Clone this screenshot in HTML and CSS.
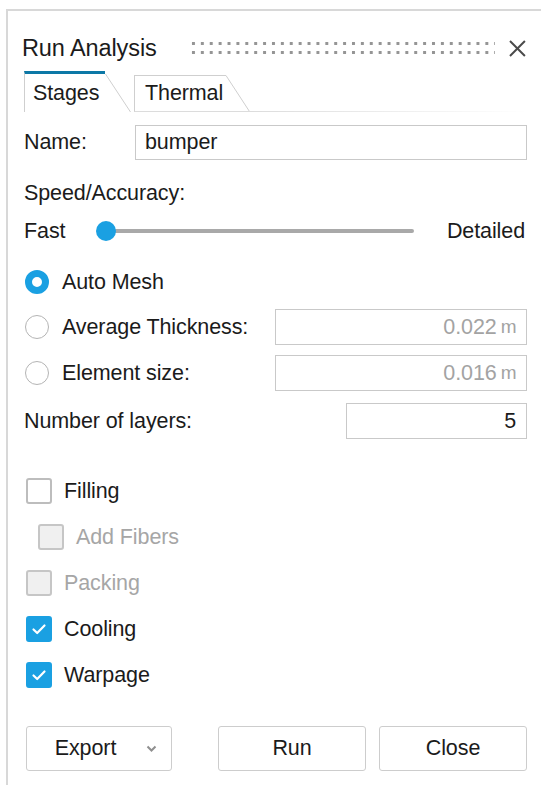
FILE: index.html
```html
<!DOCTYPE html>
<html lang="en">
<head>
<meta charset="utf-8">
<title>Run Analysis</title>
<link rel="stylesheet" href="styles.css">
</head>
<body>
<div class="panel">
  <div class="header">
    <span class="title">Run Analysis</span>
    <div class="grip"></div>
    <svg class="close" width="19" height="19" viewBox="0 0 19 19" aria-label="Close">
      <path d="M2 2 L17 17 M17 2 L2 17" stroke="#4a4a4a" stroke-width="2" fill="none"/>
    </svg>
  </div>

  <div class="tabs">
    <div class="tab tab-active">Stages</div>
    <svg class="slant" width="26" height="41" viewBox="0 0 26 41">
      <path d="M0.5 3 L25.5 41" stroke="#cfcfcf" stroke-width="1" fill="none"/>
    </svg>
    <div class="tab tab-idle">Thermal</div>
    <svg class="slant" width="24" height="37" viewBox="0 0 24 37">
      <path d="M0 0.5 L23.5 36.5" stroke="#cfcfcf" stroke-width="1" fill="none"/>
      <path d="M0 36.5 L24 36.5" stroke="#dcdcdc" stroke-width="1" fill="none"/>
    </svg>
    <div class="tab-rest"></div>
  </div>

  <div class="row row-name">
    <label class="lbl lbl-name">Name:</label>
    <div class="field field-name">bumper</div>
  </div>

  <div class="row row-text">Speed/Accuracy:</div>

  <div class="row row-slider">
    <span class="fast">Fast</span>
    <div class="slider">
      <div class="track"></div>
      <div class="thumb"></div>
    </div>
    <span class="detailed">Detailed</span>
  </div>

  <div class="row row-radio first">
    <span class="radio on"></span>
    <span>Auto Mesh</span>
  </div>
  <div class="row row-radio">
    <span class="radio"></span>
    <span class="grow">Average Thickness:</span>
    <div class="field field-unit disabled">0.022<span class="unit">m</span></div>
  </div>
  <div class="row row-radio">
    <span class="radio"></span>
    <span class="grow">Element size:</span>
    <div class="field field-unit disabled">0.016<span class="unit">m</span></div>
  </div>
  <div class="row row-layers">
    <span class="grow">Number of layers:</span>
    <div class="field field-num">5</div>
  </div>

  <div class="checks">
    <div class="check-row">
      <span class="box"></span>
      <span>Filling</span>
    </div>
    <div class="check-row sub muted">
      <span class="box off"></span>
      <span>Add Fibers</span>
    </div>
    <div class="check-row muted">
      <span class="box off"></span>
      <span>Packing</span>
    </div>
    <div class="check-row">
      <span class="box checked"><svg width="16" height="16" viewBox="0 0 16 16"><path d="M2.5 8.5 L6.2 12 L13.5 4.5" stroke="#fff" stroke-width="2.2" fill="none" stroke-linecap="round" stroke-linejoin="round"/></svg></span>
      <span>Cooling</span>
    </div>
    <div class="check-row">
      <span class="box checked"><svg width="16" height="16" viewBox="0 0 16 16"><path d="M2.5 8.5 L6.2 12 L13.5 4.5" stroke="#fff" stroke-width="2.2" fill="none" stroke-linecap="round" stroke-linejoin="round"/></svg></span>
      <span>Warpage</span>
    </div>
  </div>

  <div class="buttons">
    <button class="btn btn-export"><span>Export</span>
      <svg width="11" height="7" viewBox="0 0 11 7"><path d="M1.5 1.5 L5.5 5.5 L9.5 1.5" stroke="#8f8f8f" stroke-width="2" fill="none"/></svg>
    </button>
    <button class="btn btn-run">Run</button>
    <button class="btn btn-close">Close</button>
  </div>
</div>
</body>
</html>
```

FILE: styles.css
```css
* {
  box-sizing: border-box;
}

html, body {
  margin: 0;
  padding: 0;
  background: #ffffff;
}

body {
  font-family: "Liberation Sans", Arial, sans-serif;
  font-size: 21.5px;
  letter-spacing: -0.1px;
  color: #1b1b1b;
  overflow: hidden;
}

.panel {
  margin: 9px 0 0 6px;
  height: 776px;
  border-top: 2px solid #d8d8d8;
  border-left: 2px solid #d8d8d8;
  padding: 0 14px 0 15px;
}

/* title bar */
.header {
  display: flex;
  align-items: center;
  height: 26px;
  margin-top: 24px;
}

.title {
  width: 168px;
  margin-left: -1px;
  font-size: 23.5px;
}

.grip {
  flex: 0 0 306px;
  height: 18px;
  background-image: radial-gradient(circle, #959595 1.4px, transparent 2px);
  background-size: 8.9px 9px;
  background-position: 0 0;
}

.close {
  margin-left: 13px;
}

/* tab strip */
.tabs {
  display: flex;
  align-items: flex-end;
  height: 41px;
  margin-top: 10px;
}

.tab {
  display: flex;
  align-items: center;
}

.tab-active {
  margin-left: 1px;
  width: 81px;
  height: 41px;
  padding-left: 8px;
  padding-top: 1px;
  border-left: 1px solid #cfcfcf;
  border-top: 3px solid #0c78a6;
}

.tab-idle {
  margin-left: 3px;
  width: 92px;
  height: 37px;
  padding-left: 10px;
  border-left: 1px solid #cfcfcf;
  border-top: 1px solid #cfcfcf;
  border-bottom: 1px solid #dcdcdc;
}

.slant {
  display: block;
  flex: none;
}

.tab-rest {
  flex: 1;
  height: 1px;
  background: linear-gradient(to right, #dcdcdc, #f4f4f4 70%, #ffffff);
}

/* form rows */
.row {
  display: flex;
  align-items: center;
  padding-left: 1px;
}

.row-name {
  height: 35px;
  margin-top: 13px;
}

.lbl-name {
  width: 111px;
}

.field {
  height: 100%;
  border: 1px solid #c9c9c9;
  display: flex;
  align-items: center;
  background: #ffffff;
}

.field-name {
  flex: 1;
  padding-left: 9px;
}

.row-text {
  height: 34px;
  margin-top: 16px;
}

.row-slider {
  height: 34px;
  margin-top: 4px;
}

.fast {
  width: 72px;
}

.slider {
  position: relative;
  width: 318px;
  height: 20px;
  display: flex;
  align-items: center;
  padding-left: 10px;
}

.detailed {
  flex: 1;
  text-align: right;
  margin-right: 2px;
}

.track {
  flex: 1;
  height: 4px;
  background: #a9a9a9;
  border-radius: 2px;
}

.thumb {
  position: absolute;
  left: 0;
  top: 0;
  width: 20px;
  height: 20px;
  border-radius: 50%;
  background: #1aa0e2;
}

.row-radio {
  height: 36px;
  margin-top: 10px;
  gap: 13px;
}

.row-radio.first {
  margin-top: 17px;
  height: 34px;
}

.radio {
  flex: none;
  width: 24px;
  height: 24px;
  border-radius: 50%;
  border: 1.5px solid #b4b4b4;
  background: #ffffff;
  margin-left: 1px;
}

.radio.on {
  border: 7.5px solid #1aa0e2;
}

.grow {
  flex: 1;
}

.field-unit {
  width: 252px;
  justify-content: flex-end;
  padding-right: 10px;
}

.disabled {
  color: #a3a3a3;
}

.unit {
  font-size: 19px;
  margin-left: 4px;
  letter-spacing: -0.5px;
}

.row-layers {
  height: 36px;
  margin-top: 12px;
}

.field-num {
  width: 181px;
  justify-content: flex-end;
  padding-right: 10px;
}

/* checkboxes */
.checks {
  display: flex;
  flex-direction: column;
  gap: 20px;
  margin-top: 39px;
  padding-left: 3px;
}

.check-row {
  display: flex;
  align-items: center;
  height: 26px;
  gap: 12px;
}

.check-row.sub {
  padding-left: 12px;
}

.muted {
  color: #a6a6a6;
}

.box {
  flex: none;
  width: 26px;
  height: 26px;
  border: 2px solid #bdbdbd;
  border-radius: 3px;
  background: #ffffff;
  display: flex;
  align-items: center;
  justify-content: center;
}

.box.off {
  background: #f0f0f0;
  border-color: #c6c6c6;
}

.box.checked {
  background: #1aa0e2;
  border-color: #1aa0e2;
}

/* footer buttons */
.buttons {
  display: flex;
  margin-top: 38px;
  padding-left: 3px;
}

.btn {
  font: inherit;
  letter-spacing: inherit;
  color: #1b1b1b;
  height: 45px;
  background: #ffffff;
  border: 1.5px solid #cdcdcd;
  border-radius: 3px;
  display: flex;
  align-items: center;
  justify-content: center;
  padding: 0;
}

.btn-export {
  width: 146px;
  gap: 30px;
  padding-left: 14px;
}

.btn-run {
  width: 148px;
  margin-left: 46px;
}

.btn-close {
  width: 148px;
  margin-left: 13px;
}
```
